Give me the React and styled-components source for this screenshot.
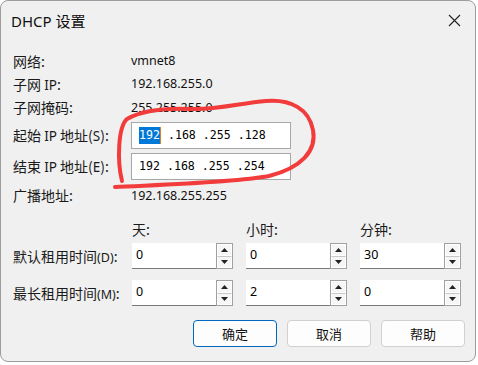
import React from 'react'
import styled, { createGlobalStyle } from 'styled-components'

const GlobalStyle = createGlobalStyle`
    html, body {
        margin: 0;
        padding: 0;
        background: #ffffff;
    }
    body {
        font-family: "Noto Sans", "Noto Sans CJK SC", sans-serif;
        color: #000;
    }
`;

const Window = styled.div`
    position: relative;
    width: 476px;
    height: 362px;
    box-sizing: border-box;
    background: #f0f0f0;
    border: 1px solid #9c9c9c;
    border-radius: 8px;
    display: flex;
    flex-direction: column;
    overflow: hidden;
`;

const TitleBar = styled.div`
    height: 38px;
    display: flex;
    align-items: center;
    justify-content: space-between;
    padding: 0 14px 0 10px;
    flex-shrink: 0;
`;

const Title = styled.span`
    font-family: "Noto Sans", "Noto Sans CJK SC", sans-serif;
    font-size: 15px;
    color: #111;
`;

const Close = styled.div`
    width: 14px;
    height: 14px;
    display: flex;
    align-items: center;
    justify-content: center;
`;

const Body = styled.div`
    padding: 10px 0 0 12px;
    display: flex;
    flex-direction: column;
`;

const InfoRow = styled.div`
    display: grid;
    grid-template-columns: 118px 1fr;
    align-items: center;
    height: ${p => p.h}px;
`;

const Label = styled.span`
    font-family: "Noto Sans CJK SC", sans-serif;
    font-size: 14px;
    color: #1a1a1a;
    white-space: nowrap;
`;

const Latin = styled.span`
    font-family: "Noto Sans", sans-serif;
    font-size: ${p => p.small ? 12.5 : 13.5}px;
`;

const Value = styled.span`
    font-family: "Noto Sans", sans-serif;
    font-size: 12.5px;
    color: #111;
`;

const IpBox = styled.div`
    width: 160px;
    height: 27px;
    box-sizing: border-box;
    background: #fff;
    border: 1px solid #a8a8a8;
    display: flex;
    align-items: center;
    padding-left: 7px;
    font-family: "DejaVu Sans Mono", monospace;
    font-size: 11.6px;
    white-space: pre;
`;

const Selected = styled.span`
    background: #0078d7;
    color: #fff;
    border-right: 1px solid #e08020;
    line-height: 17px;
`;

const HeadRow = styled.div`
    display: grid;
    grid-template-columns: 106px 101px 101px 101px;
    column-gap: 13px;
    align-items: center;
    height: ${p => p.h}px;
    margin-top: ${p => p.mt || 0}px;
`;

const Spin = styled.div`
    display: flex;
    height: 26px;
    width: 101px;
`;

const SpinField = styled.div`
    flex: 1;
    background: #fff;
    border-bottom: 1px solid #7a7a7a;
    font-family: "Noto Sans", sans-serif;
    font-size: 12.5px;
    padding: 3px 0 0 4px;
    box-sizing: border-box;
`;

const SpinButtons = styled.div`
    width: 17px;
    box-sizing: border-box;
    border: 1px solid #a0a0a0;
    display: flex;
    flex-direction: column;
    background: #e8e8e8;
`;

const SpinBtn = styled.div`
    flex: 1;
    display: flex;
    align-items: center;
    justify-content: center;
    background: #f6f6f6;
    border: 1px solid #fff;
    ${p => p.bottom && 'border-top: 1px solid #c8c8c8;'}
`;

const Footer = styled.div`
    display: flex;
    justify-content: flex-end;
    gap: 10px;
    padding: 14px 10px 0 0;
`;

const Button = styled.div`
    width: 84px;
    height: 27px;
    box-sizing: border-box;
    border-radius: 4px;
    background: #fdfdfd;
    border: 1px solid ${p => p.primary ? '#0067c0' : '#d0d0d0'};
    display: flex;
    align-items: center;
    justify-content: center;
    font-family: "Noto Sans CJK SC", sans-serif;
    font-size: 13px;
    color: #111;
`;

const Mark = styled.svg`
    position: absolute;
    left: 0;
    top: 0;
    pointer-events: none;
`;

const Arrow = ({ up }) => (
    <svg width="7" height="4" viewBox="0 0 7 4">
        <path d={up ? 'M0 4 L3.5 0 L7 4 Z' : 'M0 0 L3.5 4 L7 0 Z'} fill="#222" />
    </svg>
);

const SpinBox = ({ value }) => (
    <Spin>
        <SpinField>{value}</SpinField>
        <SpinButtons>
            <SpinBtn><Arrow up /></SpinBtn>
            <SpinBtn bottom><Arrow /></SpinBtn>
        </SpinButtons>
    </Spin>
);

const App = () => {
    return (
        <>
            <GlobalStyle />
            <Window>
                <TitleBar>
                    <Title>DHCP 设置</Title>
                    <Close>
                        <svg width="13" height="13" viewBox="0 0 13 13">
                            <path d="M1 1 L12 12 M12 1 L1 12" stroke="#222" strokeWidth="1.1" />
                        </svg>
                    </Close>
                </TitleBar>
                <Body>
                    <InfoRow h={23}>
                        <Label>网络:</Label>
                        <Value>vmnet8</Value>
                    </InfoRow>
                    <InfoRow h={23}>
                        <Label>子网 <Latin>IP</Latin>:</Label>
                        <Value>192.168.255.0</Value>
                    </InfoRow>
                    <InfoRow h={24}>
                        <Label>子网掩码:</Label>
                        <Value>255.255.255.0</Value>
                    </InfoRow>
                    <InfoRow h={32}>
                        <Label>起始 <Latin>IP</Latin> 地址(<Latin>S</Latin>):</Label>
                        <IpBox><Selected>192</Selected> .168 .255 .128</IpBox>
                    </InfoRow>
                    <InfoRow h={30}>
                        <Label>结束 <Latin>IP</Latin> 地址(<Latin>E</Latin>):</Label>
                        <IpBox>192 .168 .255 .254</IpBox>
                    </InfoRow>
                    <InfoRow h={28}>
                        <Label>广播地址:</Label>
                        <Value>192.168.255.255</Value>
                    </InfoRow>

                    <HeadRow h={20} mt={10}>
                        <span />
                        <Label>天:</Label>
                        <Label>小时:</Label>
                        <Label>分钟:</Label>
                    </HeadRow>
                    <HeadRow h={26} mt={4}>
                        <Label>默认租用时间<Latin small>(D)</Latin>:</Label>
                        <SpinBox value="0" />
                        <SpinBox value="0" />
                        <SpinBox value="30" />
                    </HeadRow>
                    <HeadRow h={26} mt={11}>
                        <Label>最长租用时间<Latin small>(M)</Latin>:</Label>
                        <SpinBox value="0" />
                        <SpinBox value="2" />
                        <SpinBox value="0" />
                    </HeadRow>
                </Body>
                <Footer>
                    <Button primary>确定</Button>
                    <Button>取消</Button>
                    <Button>帮助</Button>
                </Footer>
                <Mark width="476" height="362">
                    <path
                        d="M114 186 C150 184, 230 182, 268 175 C300 167, 316 150, 312 129 C308 108, 290 98, 265 100 C240 102, 215 109, 190 108 C165 107, 140 110, 126 118 C117 126, 116 160, 121 180"
                        fill="none"
                        stroke="#f23c3c"
                        strokeWidth="4"
                        strokeLinecap="round"
                    />
                </Mark>
            </Window>
        </>
    )
}

export default App
